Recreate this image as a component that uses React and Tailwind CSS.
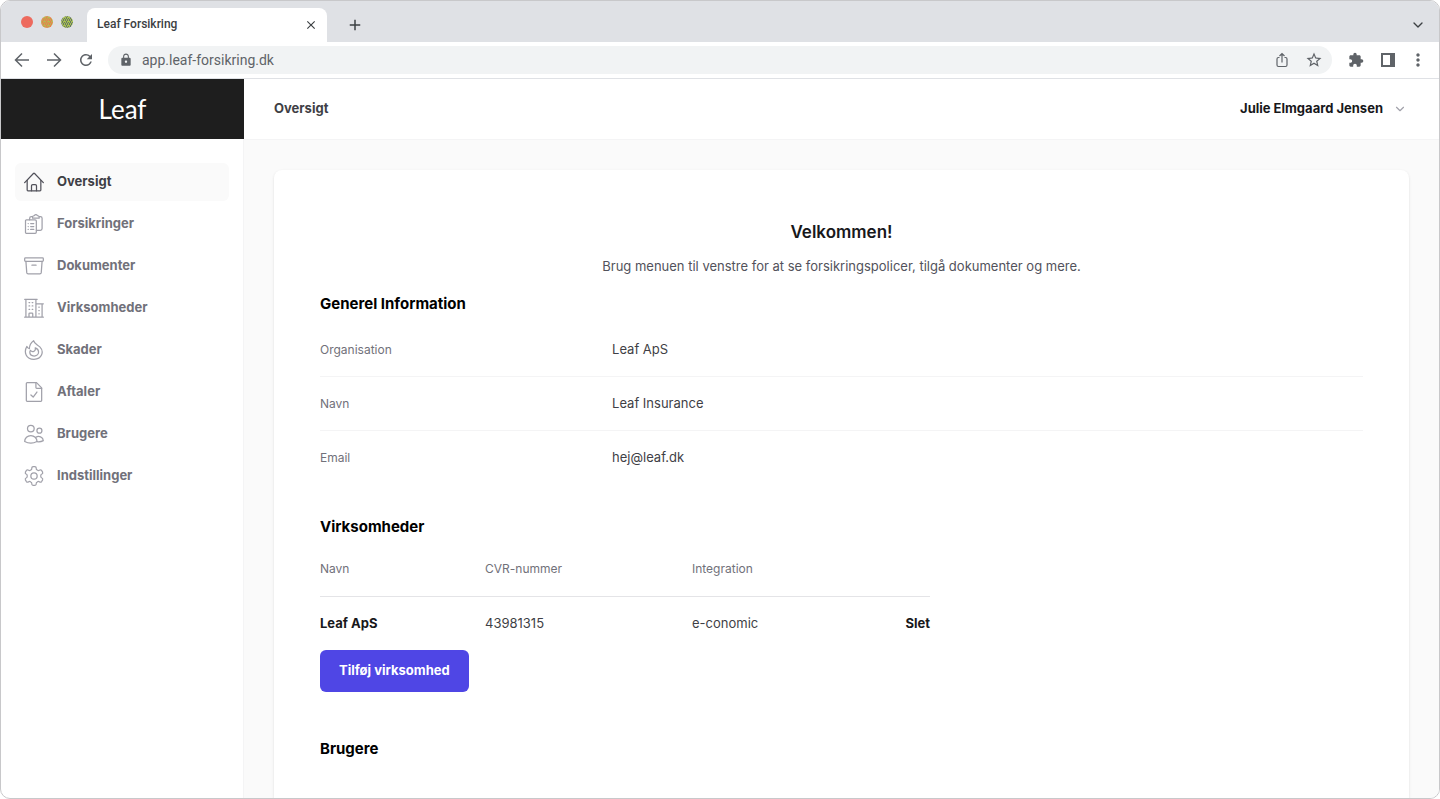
import { FiChevronDown } from "react-icons/fi";
import { MdClose, MdAdd, MdExtension, MdLock, MdMoreVert, MdRefresh, MdStarBorder } from "react-icons/md";

function NavIcon({ children }) {
  return (
    <svg
      viewBox="0 0 24 24"
      className="mx-px size-5 shrink-0"
      fill="none"
      stroke="currentColor"
      strokeWidth="1.5"
      strokeLinecap="round"
      strokeLinejoin="round"
      aria-hidden="true"
    >
      {children}
    </svg>
  );
}

// Point on a circle around the icon centre, 0 degrees is straight up
function polar(deg, r) {
  const a = (deg * Math.PI) / 180;
  return `${(12 + r * Math.sin(a)).toFixed(2)} ${(12 - r * Math.cos(a)).toFixed(2)}`;
}

// Outline of the cog with six rounded teeth
const cogPath =
  [0, 60, 120, 180, 240, 300]
    .map(
      (t, i) =>
        `${i === 0 ? "M" : "L"}${polar(t - 28, 8.2)} Q${polar(t - 19, 7.9)} ${polar(t - 17, 9.3)} ` +
        `Q${polar(t - 15, 11.4)} ${polar(t - 6, 11.3)} L${polar(t + 6, 11.3)} ` +
        `Q${polar(t + 15, 11.4)} ${polar(t + 17, 9.3)} Q${polar(t + 19, 7.9)} ${polar(t + 28, 8.2)}`
    )
    .join(" ") + " Z";

const navItems = [
  {
    name: "Oversigt",
    icon: (
      <>
        <path d="M.8 12.800 11.300 1.800a1 1 0 0 1 1.400 0l10.500 11" />
        <path d="M3.800 10v11.500a1 1 0 0 0 1 1h14.400a1 1 0 0 0 1-1V10" />
        <path d="M9 22.500v-6a1.500 1.500 0 0 1 1.500-1.500h3a1.500 1.500 0 0 1 1.500 1.500v6" />
      </>
    ),
  },
  {
    name: "Forsikringer",
    icon: (
      <>
        <path d="M2.800 7h10.500a1.500 1.500 0 0 1 1.500 1.500v13.200a1.500 1.500 0 0 1-1.500 1.500H2.800a1 1 0 0 1-1-1V8a1 1 0 0 1 1-1z" />
        <path d="M5 11.500h.1M5 15h.1M5 18.500h.1M8 11.500h3.700M8 15h3.700M8 18.500h3.700" />
        <path d="M6.800 7V5a2 2 0 0 1 2-2h1.500M18.200 3h1.500a2 2 0 0 1 2 2v12.500a2 2 0 0 1-2 2h-4.900" />
        <path d="M10.300 5h7.900V3.800a2 2 0 0 0-1.900-2h-.3a2 2 0 0 0-3.500 0h-.3a2 2 0 0 0-1.900 2z" />
      </>
    ),
  },
  {
    name: "Dokumenter",
    icon: (
      <>
        <rect x=".8" y="2.200" width="22.400" height="4.300" rx="1" />
        <path d="m2.300 6.500 1 13.500a1.700 1.700 0 0 0 1.700 1.500h14a1.700 1.700 0 0 0 1.700-1.500l1-13.500M9.500 11h5" />
      </>
    ),
  },
  {
    name: "Virksomheder",
    icon: (
      <>
        <path d="M.8 23h22.400M2.300 23V1.500M14.300 23V1.500M.8 1.500h15M14.300 7h8.900M21.700 7v16M6 23v-4a1 1 0 0 1 1-1h2.500a1 1 0 0 1 1 1v4" />
        <path d="M6 5.500h.8M9.800 5.500h.8M6 9.500h.8M9.800 9.500h.8M6 13.500h.8M9.800 13.500h.8M17.800 11h.5M17.800 15h.5M17.800 19h.5" />
      </>
    ),
  },
  {
    name: "Skader",
    icon: (
      <>
        <path d="M11.500.8c.5 3.400 4.500 4.700 7.500 7.500 5.500 5.500 2.500 14.900-7 14.900-9.800 0-12.500-9-8.500-15.500.5 1.500 1.500 2.500 3 2.800C6.500 7 8 3.300 11.500.8z" />
        <path d="M13.500 9.500c2.800 1 4 3 4 5 0 2.700-2.300 4.700-5.300 4.700S7 17.300 7 14.800c0-.9.300-1.600.7-2.300 1 1.300 2.200 1.700 3.500 1.400 2-.4 2.800-2.200 2.300-4.400z" />
      </>
    ),
  },
  {
    name: "Aftaler",
    icon: (
      <>
        <path d="M15 .8H3.800a1 1 0 0 0-1 1v20.400a1 1 0 0 0 1 1h16.400a1 1 0 0 0 1-1V7z" />
        <path d="M14.300.8V6.500a1 1 0 0 0 1 1h5.900M8.300 15.500l2.700 2.500 4.500-6" />
      </>
    ),
  },
  {
    name: "Brugere",
    icon: (
      <>
        <circle cx="8.200" cy="5.500" r="4" />
        <circle cx="18.500" cy="8" r="3" />
        <path d="M.8 21c0-4.200 3.300-7.200 7.400-7.200s7.400 3 7.400 7.200c-4.500 2.400-10.300 2.400-14.800 0z" />
        <path d="M14.300 16c3.300-2.600 8.700-.4 8.900 4-2.300 1.200-5 1.500-7.600 1.200" />
      </>
    ),
  },
  {
    name: "Indstillinger",
    icon: (
      <>
        <circle cx="12" cy="12" r="3.800" />
        <path d={cogPath} />
      </>
    ),
  },
];

const info = [
  { label: "Organisation", value: "Leaf ApS" },
  { label: "Navn", value: "Leaf Insurance" },
  { label: "Email", value: "hej@leaf.dk" },
];

const companies = [{ name: "Leaf ApS", cvr: "43981315", integration: "e-conomic" }];

function Arrow({ d }) {
  return (
    <svg viewBox="0 0 18 18" className="size-[18px]" fill="none" stroke="currentColor" strokeWidth="1.5">
      <path d={d} />
    </svg>
  );
}

function BrowserBar() {
  return (
    <div className="font-[Roboto,sans-serif] text-[#5f6368]">
      {/* Tabs */}
      <div className="flex h-[41px] items-end bg-[#dfe1e5] pr-[13px] pl-5">
        <svg viewBox="0 0 52 12" className="mb-[14px] h-3 w-[52px]" aria-hidden="true">
          <defs>
            <pattern id="amber" width="4" height="4" patternUnits="userSpaceOnUse">
              <rect width="4" height="4" fill="#b5b850" />
              <path d="M0 0h1v1H0zM2 0h1v1H2zM1 1h1v1H1zM3 2h1v1H3zM1 2h1v1H1zM0 3h1v1H0zM2 3h1v1H2z" fill="#f0764c" />
            </pattern>
            <pattern id="green" width="4" height="4" patternUnits="userSpaceOnUse">
              <rect width="4" height="4" fill="#a9c24c" />
              <path d="M0 0h1v1H0zM2 0h1v1H2zM1 1h1v1H1zM3 2h1v1H3zM1 2h1v1H1zM0 3h1v1H0zM2 3h1v1H2z" fill="#65756a" />
            </pattern>
          </defs>
          <circle cx="6" cy="6" r="6" fill="#ed6a5e" />
          <circle cx="26" cy="6" r="6" fill="url(#amber)" />
          <circle cx="46" cy="6" r="6" fill="url(#green)" />
        </svg>
        <div className="ml-[14px] flex h-[34px] w-60 items-center justify-between rounded-t-lg bg-white px-[9px]">
          <span className="pb-[2px] pl-px text-xs font-medium text-[#3c4043]">Leaf Forsikring</span>
          <button aria-label="Luk fane" className="text-[#3c4043]">
            <MdClose className="size-[14px]" />
          </button>
        </div>
        <button aria-label="Ny fane" className="mb-2 ml-[19px] text-[#3c4043]">
          <MdAdd className="size-[18px]" />
        </button>
        <button aria-label="Søg i faner" className="mb-[9px] ml-auto text-[#3c4043]">
          <FiChevronDown className="size-4" />
        </button>
      </div>

      {/* Toolbar */}
      <div className="flex h-[37px] items-center border-b border-[#dfe1e5] bg-white pr-[11px] pl-3">
        <div className="flex gap-[14px]">
          <button aria-label="Tilbage">
            <Arrow d="M16 9H3M9 2.500 2.500 9 9 15.500" />
          </button>
          <button aria-label="Frem">
            <Arrow d="M2 9h13M9 2.500 15.500 9 9 15.500" />
          </button>
          <button aria-label="Genindlæs">
            <MdRefresh className="size-[18px]" />
          </button>
        </div>
        <div className="ml-[13px] flex h-7 flex-1 items-center rounded-full bg-[#f1f3f4] pr-[9px] pl-[11px]">
          <MdLock className="size-[14px]" />
          <input
            type="text"
            aria-label="Adresse"
            defaultValue="app.leaf-forsikring.dk"
            className="ml-[9px] min-w-0 flex-1 bg-transparent text-sm outline-none"
          />
          <button aria-label="Del">
            <svg viewBox="0 0 16 16" className="size-4" fill="none" stroke="currentColor" strokeWidth="1.200">
              <path d="M5.500 5.500h-1a1.500 1.500 0 0 0-1.500 1.500v6A1.500 1.500 0 0 0 4.500 14.500h7a1.500 1.500 0 0 0 1.500-1.500V7a1.500 1.500 0 0 0-1.500-1.500h-1M8 10.500V2M5.500 4 8 1.500 10.500 4" />
            </svg>
          </button>
          <button aria-label="Bogmærk" className="ml-[15px]">
            <MdStarBorder className="size-[18px]" />
          </button>
        </div>
        <div className="ml-4 flex items-center">
          <button aria-label="Udvidelser">
            <MdExtension className="size-4" />
          </button>
          <button aria-label="Sidepanel" className="ml-4">
            <svg viewBox="0 0 16 16" className="size-4" fill="currentColor">
              <path fillRule="evenodd" d="M1 1h14v14H1zM3 3v10h7V3z" />
            </svg>
          </button>
          <button aria-label="Mere" className="ml-3">
            <MdMoreVert className="size-5" />
          </button>
        </div>
      </div>
    </div>
  );
}

function Sidebar() {
  return (
    <aside className="flex w-[243px] shrink-0 flex-col">
      <div className="flex h-[60px] items-center justify-center bg-[#1e1e1e]">
        <span className="font-[Lato,sans-serif] text-[26px] text-white">Leaf</span>
      </div>
      <nav className="flex flex-1 flex-col gap-1 border-r border-[#f4f4f5] px-[14px] pt-6">
        {navItems.map((item, i) => (
          <a
            key={item.name}
            href="#"
            aria-current={i === 0 ? "page" : undefined}
            className={
              i === 0
                ? "flex h-[38px] items-center gap-3 rounded-md bg-[#fafafa] px-2 text-[#52525b]"
                : "flex h-[38px] items-center gap-3 rounded-md px-2 text-[#a1a1aa]"
            }
          >
            <NavIcon>{item.icon}</NavIcon>
            <span
              className={
                i === 0 ? "text-[13px] font-bold text-[#3f3f46]" : "text-[13px] font-bold text-[#71717a]"
              }
            >
              {item.name}
            </span>
          </a>
        ))}
      </nav>
    </aside>
  );
}

export default function App() {
  return (
    <div className="flex h-screen flex-col overflow-hidden rounded-[10px] border border-[#c8c8ca] bg-white font-[Inter,sans-serif]">
      <BrowserBar />

      <div className="flex min-h-0 flex-1">
        <Sidebar />

        <div className="flex min-w-0 flex-1 flex-col">
          <header className="flex h-[61px] shrink-0 items-center justify-between border-b border-[#f4f4f5] pr-8 pl-[30px]">
            <h1 className="text-[13px] font-bold text-[#3f3f46]">Oversigt</h1>
            <button className="flex items-center gap-[10px] text-[13px] font-bold text-[#18181b]">
              Julie Elmgaard Jensen
              <FiChevronDown className="size-[14px] text-[#a1a1aa]" />
            </button>
          </header>

          <main className="flex min-h-0 flex-1 flex-col overflow-hidden bg-[#fafafa] px-[30px] pt-[30px]">
            <div className="flex-1 rounded-t-lg bg-white px-[46px] pt-12 shadow-sm">
              {/* Velkomst */}
              <section className="text-center">
                <h2 className="text-[17px] leading-7 font-semibold text-[#18181b]">Velkommen!</h2>
                <p className="mt-[10px] text-[13px] leading-5 text-[#52525b]">
                  Brug menuen til venstre for at se forsikringspolicer, tilgå dokumenter og mere.
                </p>
              </section>

              {/* Generel information */}
              <section className="mt-4">
                <h3 className="text-[15px] leading-6 font-bold text-black">Generel Information</h3>
                <dl className="mt-[7px] divide-y divide-[#f4f4f5] text-[13px]">
                  {info.map((row) => (
                    <div key={row.label} className="flex h-[54px] items-center">
                      <dt className="w-[28%] text-xs text-[#71717a]">{row.label}</dt>
                      <dd className="text-[#3f3f46]">{row.value}</dd>
                    </div>
                  ))}
                </dl>
              </section>

              {/* Virksomheder */}
              <section className="mt-[30px]">
                <h3 className="text-[15px] leading-6 font-bold text-black">Virksomheder</h3>
                <table className="mt-[3px] w-[610px] table-fixed text-left text-[13px]">
                  <thead className="border-b border-[#e4e4e7] text-xs text-[#71717a]">
                    <tr className="h-[54px]">
                      <th className="w-[165px] font-normal">Navn</th>
                      <th className="w-[207px] font-normal">CVR-nummer</th>
                      <th className="font-normal">Integration</th>
                      <td className="w-20" />
                    </tr>
                  </thead>
                  <tbody>
                    {companies.map((c) => (
                      <tr key={c.cvr} className="h-[54px] text-[#3f3f46]">
                        <td className="font-bold text-[#18181b]">{c.name}</td>
                        <td>{c.cvr}</td>
                        <td>{c.integration}</td>
                        <td className="text-right">
                          <button className="font-bold text-[#18181b]">Slet</button>
                        </td>
                      </tr>
                    ))}
                  </tbody>
                </table>
                <button className="h-[42px] rounded-md bg-[#4f46e5] px-[19px] text-[13px] font-bold text-white">
                  Tilføj virksomhed
                </button>
              </section>

              {/* Brugere */}
              <section className="mt-[45px]">
                <h3 className="text-[15px] leading-6 font-bold text-black">Brugere</h3>
              </section>
            </div>
          </main>
        </div>
      </div>
    </div>
  );
}
